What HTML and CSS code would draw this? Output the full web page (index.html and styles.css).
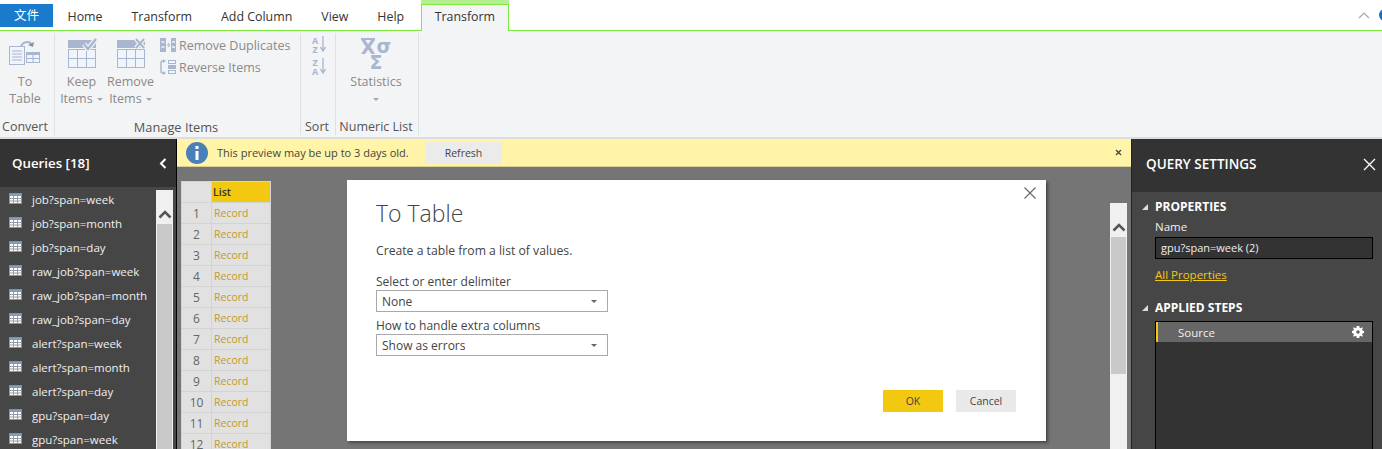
FILE: index.html
```html
<!DOCTYPE html>
<html lang="en">
<head>
<meta charset="utf-8">
<title>To Table</title>
<link rel="stylesheet" href="styles.css">
</head>
<body>
<svg class="defs" width="0" height="0" aria-hidden="true">
  <symbol id="tbl" viewBox="0 0 13 11">
    <rect width="13" height="11" fill="#fff"/>
    <rect width="13" height="3" fill="#7f9cc4"/>
    <path d="M0 .5h13M.5 0v11M12.500 0v11M0 10.500h13" stroke="#8a8f99" fill="none"/>
    <path d="M0 5.500h13M0 8h13M4.500 3v8M8.500 3v8" stroke="#9a9a9a" fill="none"/>
  </symbol>
</svg>
<div class="app">
  <nav class="tabs">
    <a class="file-tab">文件</a>
    <a class="tab">Home</a>
    <a class="tab">Transform</a>
    <a class="tab">Add Column</a>
    <a class="tab">View</a>
    <a class="tab">Help</a>
    <a class="tab tab-active">Transform</a>
    <span class="tabs-end">
      <svg class="collapse" width="12" height="7" viewBox="0 0 12 7"><path d="M1 6l5-5 5 5" fill="none" stroke="#a8a8a8" stroke-width="1.200"/></svg>
      <span class="help-dot"></span>
    </span>
  </nav>

  <section class="ribbon">
    <div class="group g-convert">
      <div class="group-body">
        <div class="big-btn b-table">
          <svg class="ico-table" width="32" height="26" viewBox="0 0 32 26">
            <path d="M12 8c1-5 8-7 11-2" fill="none" stroke="#a9b6cf" stroke-width="2"/>
            <path d="M19 6l5 2 1-5z" fill="#8e9296"/>
            <rect x=".5" y="7.500" width="15" height="18" fill="#f0f4fb" stroke="#a9b6cf"/>
            <path d="M3 12h10M3 15h10M3 18h10M3 21h10" stroke="#a9b6cf"/>
            <rect x="17" y="13" width="14" height="3" fill="#a9b6cf"/>
            <rect x="17.500" y="15.500" width="13" height="8" fill="#f0f4fb" stroke="#a9b6cf"/>
            <path d="M24 16v7M18 19.500h12" stroke="#a9b6cf"/>
          </svg>
          <span class="big-label">To<br>Table</span>
        </div>
      </div>
      <div class="group-name">Convert</div>
    </div>
    <div class="group g-manage">
      <div class="group-body">
        <div class="big-btn b-keep">
          <svg width="31" height="30" viewBox="0 0 31 30">
            <rect x="1" y="2" width="28" height="8" fill="#a9b6cf"/>
            <rect x="1.500" y="11.500" width="27" height="18" fill="#f0f4fb" stroke="#a9b6cf"/>
            <path d="M1 20.500h28M10.500 11v18M19.500 11v18" stroke="#a9b6cf"/>
            <path d="M17 6l4 5 8-10" fill="none" stroke="#f3f4f6" stroke-width="5"/>
            <path d="M17 6l4 5 8-10" fill="none" stroke="#a9b6cf" stroke-width="2.500"/>
          </svg>
          <span class="big-label">Keep<br>Items <i class="caret"></i></span>
        </div>
        <div class="big-btn b-remove">
          <svg width="31" height="30" viewBox="0 0 31 30">
            <rect x="1" y="2" width="28" height="8" fill="#a9b6cf"/>
            <rect x="1.500" y="11.500" width="27" height="18" fill="#f0f4fb" stroke="#a9b6cf"/>
            <path d="M1 20.500h28M10.500 11v18M19.500 11v18" stroke="#a9b6cf"/>
            <path d="M20 1l8 9M28 1l-8 9" stroke="#f3f4f6" stroke-width="4.500"/>
            <path d="M20 1l8 9M28 1l-8 9" stroke="#a9b6cf" stroke-width="2"/>
          </svg>
          <span class="big-label">Remove<br>Items <i class="caret"></i></span>
        </div>
        <div class="small-col">
          <div class="small-btn">
            <svg width="16" height="16" viewBox="0 0 16 16">
              <rect x="0" y="1" width="6" height="14" fill="#a9b6cf"/>
              <rect x="11" y="1" width="5" height="14" fill="#a9b6cf"/>
              <path d="M1.500 5h3M1.500 10h3M12 5h3M12 10h3" stroke="#f0f4fb" stroke-width="1.500"/>
              <path d="M7 8h3" stroke="#a9b6cf"/><path d="M8 6l2 2-2 2" fill="none" stroke="#a9b6cf"/>
            </svg>
            <span>Remove Duplicates</span>
          </div>
          <div class="small-btn">
            <svg width="16" height="16" viewBox="0 0 16 16">
              <path d="M5 2H2.500Q1 2 1 4v8q0 2 1.500 2H5" fill="none" stroke="#a9b6cf" stroke-width="1.500"/>
              <path d="M3 0l3 2-3 2zM3 12l3 2-3 2z" fill="#a9b6cf"/>
              <rect x="8.500" y="1.500" width="7" height="3" fill="#f0f4fb" stroke="#a9b6cf"/>
              <rect x="8.500" y="6.500" width="7" height="3" fill="#a9b6cf" stroke="#a9b6cf"/>
              <rect x="8.500" y="11.500" width="7" height="3" fill="#f0f4fb" stroke="#a9b6cf"/>
            </svg>
            <span>Reverse Items</span>
          </div>
        </div>
      </div>
      <div class="group-name">Manage Items</div>
    </div>
    <div class="group g-sort">
      <div class="group-body sort-body">
        <div class="sort-btn"><span class="az">A<br>Z</span><svg width="6" height="16" viewBox="0 0 6 16"><path d="M3 0v15M.5 11L3 15l2.500-4" fill="none" stroke="#a9b6cf" stroke-width="1.300"/></svg></div>
        <div class="sort-btn"><span class="az">Z<br>A</span><svg width="6" height="16" viewBox="0 0 6 16"><path d="M3 0v15M.5 11L3 15l2.500-4" fill="none" stroke="#a9b6cf" stroke-width="1.300"/></svg></div>
      </div>
      <div class="group-name">Sort</div>
    </div>
    <div class="group g-numeric">
      <div class="group-body">
        <div class="big-btn b-stats">
          <span class="stat-icon"><span class="stat-top"><span class="xbar">X</span><span class="sig">σ</span></span><span class="sum">Σ</span></span>
          <span class="big-label">Statistics<br><i class="caret"></i></span>
        </div>
      </div>
      <div class="group-name">Numeric List</div>
    </div>
  </section>

  <main class="workspace">
    <aside class="queries">
      <header class="queries-head">
        <span>Queries [18]</span>
        <svg width="8" height="11" viewBox="0 0 8 11"><path d="M6.500 1L2 5.500 6.500 10" fill="none" stroke="#fff" stroke-width="2"/></svg>
      </header>
      <div class="queries-body">
        <ul class="qlist">
          <li><svg class="tbl-ico"><use href="#tbl"/></svg>job?span=week</li>
          <li><svg class="tbl-ico"><use href="#tbl"/></svg>job?span=month</li>
          <li><svg class="tbl-ico"><use href="#tbl"/></svg>job?span=day</li>
          <li><svg class="tbl-ico"><use href="#tbl"/></svg>raw_job?span=week</li>
          <li><svg class="tbl-ico"><use href="#tbl"/></svg>raw_job?span=month</li>
          <li><svg class="tbl-ico"><use href="#tbl"/></svg>raw_job?span=day</li>
          <li><svg class="tbl-ico"><use href="#tbl"/></svg>alert?span=week</li>
          <li><svg class="tbl-ico"><use href="#tbl"/></svg>alert?span=month</li>
          <li><svg class="tbl-ico"><use href="#tbl"/></svg>alert?span=day</li>
          <li><svg class="tbl-ico"><use href="#tbl"/></svg>gpu?span=day</li>
          <li><svg class="tbl-ico"><use href="#tbl"/></svg>gpu?span=week</li>
        </ul>
        <div class="vscroll vscroll-left">
          <div class="vs-up"><svg width="14" height="9" viewBox="0 0 14 9"><path d="M1.500 7.500L7 2l5.500 5.500" fill="none" stroke="#555" stroke-width="2.500"/></svg></div>
          <div class="vs-thumb thumb-fill"></div>
        </div>
      </div>
    </aside>

    <section class="center">
      <div class="msgbar">
        <svg class="info" width="22" height="22" viewBox="0 0 22 22"><circle cx="11" cy="11" r="11" fill="#4a80b8"/><rect x="9.500" y="9" width="3" height="9" fill="#fff"/><rect x="9.500" y="4" width="3" height="3" fill="#fff"/></svg>
        <span class="msg-text">This preview may be up to 3 days old.</span>
        <button class="refresh">Refresh</button>
        <svg class="msg-x" width="7" height="7" viewBox="0 0 7 7"><path d="M1 1l5 5M6 1L1 6" stroke="#444" stroke-width="1.300"/></svg>
      </div>
      <div class="canvas">
        <table class="grid-table">
          <thead><tr><th class="corner"></th><th class="list-h">List</th></tr></thead>
          <tbody>
            <tr><td class="num">1</td><td class="rec">Record</td></tr>
            <tr><td class="num">2</td><td class="rec">Record</td></tr>
            <tr><td class="num">3</td><td class="rec">Record</td></tr>
            <tr><td class="num">4</td><td class="rec">Record</td></tr>
            <tr><td class="num">5</td><td class="rec">Record</td></tr>
            <tr><td class="num">6</td><td class="rec">Record</td></tr>
            <tr><td class="num">7</td><td class="rec">Record</td></tr>
            <tr><td class="num">8</td><td class="rec">Record</td></tr>
            <tr><td class="num">9</td><td class="rec">Record</td></tr>
            <tr><td class="num">10</td><td class="rec">Record</td></tr>
            <tr><td class="num">11</td><td class="rec">Record</td></tr>
            <tr><td class="num">12</td><td class="rec">Record</td></tr>
          </tbody>
        </table>
        <div class="vscroll vscroll-right">
          <div class="vs-up"><svg width="14" height="9" viewBox="0 0 14 9"><path d="M1.500 7.500L7 2l5.500 5.500" fill="none" stroke="#555" stroke-width="2.500"/></svg></div>
          <div class="vs-thumb thumb-main"></div>
        </div>
        <div class="dialog">
          <svg class="dlg-x" width="12" height="12" viewBox="0 0 12 12"><path d="M.5.500l11 11M11.500.500l-11 11" stroke="#666" stroke-width="1.100"/></svg>
          <h1 class="dlg-title">To Table</h1>
          <p class="dlg-desc">Create a table from a list of values.</p>
          <label class="dlg-label">Select or enter delimiter</label>
          <div class="select"><span>None</span><i class="sel-caret"></i></div>
          <label class="dlg-label">How to handle extra columns</label>
          <div class="select"><span>Show as errors</span><i class="sel-caret"></i></div>
          <div class="dlg-actions">
            <button class="btn btn-ok">OK</button>
            <button class="btn btn-cancel">Cancel</button>
          </div>
        </div>
      </div>
    </section>

    <aside class="settings">
      <header class="settings-head">
        <span>QUERY SETTINGS</span>
        <svg width="13" height="13" viewBox="0 0 13 13"><path d="M1 1l11 11M12 1L1 12" stroke="#fff" stroke-width="1.300"/></svg>
      </header>
      <div class="settings-body">
        <h2 class="sec-title"><i class="tri"></i>PROPERTIES</h2>
        <div class="prop-name">Name</div>
        <div class="name-input">gpu?span=week (2)</div>
        <a class="all-props">All Properties</a>
        <h2 class="sec-title steps-title"><i class="tri"></i>APPLIED STEPS</h2>
        <div class="steps">
          <div class="step">
            <span>Source</span>
            <svg width="12" height="12" viewBox="0 0 12 12"><path fill="#fff" fill-rule="evenodd" d="M4.700 0h2.600l.3 1.700 1.200.5L10.200 1.200 11 2l-1 1.400.5 1.200 1.500.3v2.200l-1.500.3-.5 1.200 1 1.400-.8.800-1.400-1-1.200.5-.3 1.700H4.700l-.3-1.700-1.200-.5-1.400 1-.8-.8 1-1.400-.5-1.200L0 7.100V4.900l1.500-.3.500-1.200-1-1.400.8-.8 1.400 1 1.200-.5zM6 4.200a1.800 1.800 0 100 3.600 1.800 1.800 0 000-3.600z"/></svg>
          </div>
        </div>
      </div>
    </aside>
  </main>
</div>
</body>
</html>
```

FILE: styles.css
```css
* { box-sizing: border-box; }
html, body { margin: 0; height: 100%; overflow: hidden; }
body { font-family: "Open Sans", "Noto Sans CJK SC", sans-serif; font-size: 12px; background: #fff; color: #333; }
.defs { position: absolute; }
.app { display: flex; flex-direction: column; height: 449px; overflow: hidden; }

/* tabs */
.tabs { display: flex; align-items: flex-end; height: 31px; border-bottom: 1px solid #7ee83c; flex: none; }
.file-tab { width: 53px; height: 23px; margin-bottom: 3px; background: #1a7bcd; color: #fff; text-align: center; line-height: 23px; font-size: 12.500px; }
.tab { padding: 0 14.500px; height: 30px; line-height: 33px; font-size: 12.400px; color: #333; }
.tab-active { margin-left: 2px; margin-bottom: -1px; padding: 1px 13px 0; border: 1px solid #7ee83c; border-bottom: 0; background: #f3f4f6; box-shadow: 0 -4px 0 #b6ee92; line-height: 22px; height: 27px; }
.tabs-end { margin-left: auto; display: flex; align-items: center; align-self: center; gap: 9px; width: 24px; overflow: hidden; height: 14px; }
.collapse { flex: none; }
.help-dot { flex: none; width: 12px; height: 12px; border-radius: 50%; background: #1372c5; }

/* ribbon */
.ribbon { display: flex; height: 108px; flex: none; background: #f3f4f6; border-bottom: 2px solid #dcdcdc; color: #8a8a8a; padding-top: 2px; }
.group { display: flex; flex-direction: column; border-right: 1px solid #dfe0e2; height: 102px; }
.group-body { flex: 1; display: flex; }
.group-name { height: 16px; line-height: 16px; text-align: center; color: #555; font-size: 12.500px; padding-right: 2px; white-space: nowrap; }
.g-convert { width: 55px; }
.g-convert .group-name { padding-right: 4px; }
.g-manage { width: 246px; }
.g-manage .group-name { padding-right: 3px; font-size: 12.800px; }
.g-sort { width: 35px; }
.g-numeric { width: 83px; }
.big-btn { display: flex; flex-direction: column; align-items: center; font-size: 12.500px; line-height: 17px; }
.big-label { text-align: center; color: #8a8a8a; white-space: nowrap; }
.b-table { width: 50px; padding-top: 6px; }
.ico-table { margin-bottom: 8px; }
.b-keep { width: 49px; padding-top: 5px; margin-left: 2px; }
.b-remove { width: 49px; padding-top: 5px; }
.b-keep svg, .b-remove svg { margin: 0 0 5px 2px; }
.b-stats { width: 80px; padding-top: 5px; }
.caret { display: inline-block; width: 0; height: 0; border: 3px solid transparent; border-top: 3px solid #a8a8a8; border-bottom: 0; vertical-align: middle; margin-left: 1px; }
.small-col { display: flex; flex-direction: column; gap: 6px; padding-top: 4px; padding-left: 5px; }
.small-btn { display: flex; align-items: center; gap: 3px; height: 16px; font-size: 12.500px; white-space: nowrap; color: #8a8a8a; }
.sort-body { flex-direction: column; padding: 3px 0 0 10px; gap: 5px; }
.sort-btn { display: flex; gap: 1px; height: 17px; align-items: flex-start; }
.az { font-size: 9px; line-height: 9px; font-weight: 700; color: #a9b6cf; text-align: center; width: 8px; }
.stat-icon { display: flex; flex-direction: column; align-items: center; height: 35px; width: 40px; color: #a9b6cf; font-weight: 700; font-family: "DejaVu Sans", sans-serif; font-size: 19px; white-space: nowrap; }
.stat-top { display: flex; height: 17px; line-height: 17px; }
.xbar { border-top: 2px solid #a9b6cf; line-height: 15px; height: 17px; }
.sig { line-height: 17px; margin-left: 1px; }
.sum { line-height: 15px; height: 15px; }

/* workspace */
.workspace { display: flex; flex: 1; min-height: 0; }
.queries { width: 177px; flex: none; border-right: 1px solid #000; display: flex; flex-direction: column; background: #464646; }
.queries-head { height: 48px; flex: none; background: #333; color: #fff; display: flex; align-items: center; justify-content: space-between; padding: 0 9px 0 12px; font-weight: 600; font-size: 13.300px; }
.queries-body { flex: 1; display: flex; min-height: 0; padding-top: 3px; }
.qlist { list-style: none; margin: -3px 0 0; padding: 0; width: 156px; flex: none; color: #f0f0f0; }
.qlist li { display: flex; align-items: center; gap: 10px; height: 24px; padding-left: 9px; white-space: nowrap; font-size: 11.500px; }
.tbl-ico { width: 13px; height: 11px; flex: none; margin-top: -1px; }
.vscroll { background: #f0f0f0; display: flex; flex-direction: column; align-items: center; flex: none; width: 17px; }
.vs-up { height: 34px; display: flex; align-items: center; justify-content: center; flex: none; padding-top: 14px; }
.vs-thumb { background: #c9c9c9; width: 15px; }
.thumb-fill { flex: 1; }
.thumb-main { height: 137px; }
.vscroll-left { height: 100%; }

.center { flex: 1; min-width: 0; display: flex; flex-direction: column; background: #757575; }
.msgbar { height: 28px; flex: none; background: #fff4a8; border-bottom: 1px solid #d8cf90; display: flex; align-items: center; padding-left: 9px; }
.msg-text { margin-left: 9px; font-size: 11px; color: #444; width: 208px; white-space: nowrap; }
.refresh { width: 77px; height: 22px; border: 0; background: #ebebeb; font: 10.500px "Open Sans", sans-serif; color: #444; padding: 0; }
.msg-x { margin-left: auto; margin-right: 9px; }
.canvas { flex: 1; min-height: 0; display: flex; justify-content: space-between; align-items: flex-start; padding: 14px 4px 0 4px; position: relative; overflow: hidden; }
.grid-table { border-collapse: collapse; background: #e1e1e1; table-layout: fixed; width: 90px; font-size: 11px; flex: none; }
.grid-table th, .grid-table td { padding: 0; height: 21px; border: 1px solid #d3d3d3; }
.corner { width: 30px; background: #e1e1e1; }
.list-h { background: #f2c811; text-align: left; padding-left: 1px !important; color: #333; font-weight: 600; font-size: 10.500px; }
.num { text-align: center; color: #666; font-size: 12px; }
.rec { color: #c49a2c; padding-left: 2px !important; font-size: 10.500px; }
.vscroll-right { margin-top: 22px; height: 300px; }

.dialog { position: absolute; left: 170px; top: 13px; width: 699px; height: 261px; background: #fff; box-shadow: 2px 2px 3px rgba(0,0,0,.4); padding: 19px 29px 0; color: #444; }
.dlg-x { position: absolute; right: 10px; top: 7px; }
.dlg-title { margin: 0 0 15px; font-size: 23px; line-height: 28px; font-weight: 300; color: #444; }
.dlg-desc { margin: 0 0 14px; font-size: 12.200px; line-height: 18px; }
.dlg-label { display: block; font-size: 12px; line-height: 16px; }
.select { width: 232px; height: 22px; border: 1px solid #a9a9a9; margin: 0 0 6px; display: flex; align-items: center; justify-content: space-between; padding: 0 10px 0 5px; font-size: 12px; }
.sel-caret { width: 0; height: 0; border: 3px solid transparent; border-top: 3px solid #666; border-bottom: 0; }
.dlg-actions { position: absolute; right: 30px; top: 210px; display: flex; gap: 13px; }
.btn { width: 60px; height: 22px; border: 0; padding: 0; font: 10.500px "Open Sans", sans-serif; color: #444; }
.btn-ok { background: #f2c811; }
.btn-cancel { background: #e9e9e9; }

.settings { width: 251px; flex: none; display: flex; flex-direction: column; background: #464646; color: #f0f0f0; border-left: 1px solid #222; }
.settings-head { height: 53px; flex: none; background: #333; display: flex; align-items: center; justify-content: space-between; padding: 0 6px 3px 14px; color: #fff; font-weight: 600; font-size: 13.500px; }
.settings-body { flex: 1; padding: 7px 9px 0 23px; }
.sec-title { position: relative; margin: 0; font-size: 12px; line-height: 16px; font-weight: 700; color: #fff; }
.tri { position: absolute; left: -13px; top: 5px; width: 0; height: 0; border-style: solid; border-width: 0 0 6px 6px; border-color: transparent transparent #ddd transparent; }
.prop-name { margin-top: 4px; line-height: 16px; font-size: 11.500px; }
.name-input { margin-top: 2px; height: 22px; border: 1px solid #000; background: #333; padding-left: 5px; line-height: 20px; font-size: 11px; }
.all-props { display: block; margin-top: 8px; color: #f2c811; text-decoration: underline; line-height: 16px; font-size: 11.500px; }
.steps-title { margin-top: 17px; }
.steps { margin-top: 5px; height: 200px; border: 1px solid #000; background: #333; }
.step { height: 20px; background: #666; border-left: 2px solid #f2c811; display: flex; align-items: center; justify-content: space-between; padding: 0 8px 0 20px; color: #f0f0f0; font-size: 11.500px; }
```
